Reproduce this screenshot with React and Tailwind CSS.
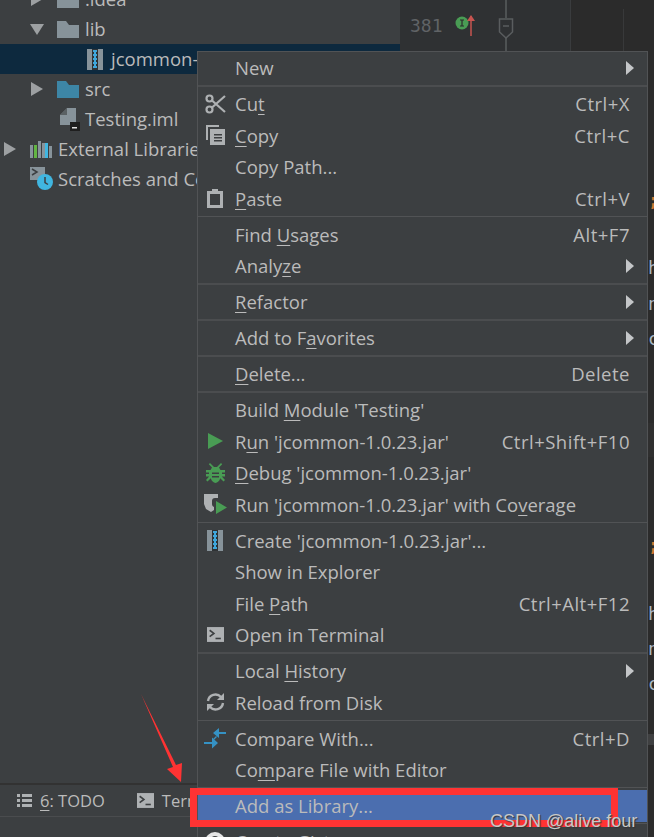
const Tri = ({ down }) => (
  <svg width="14" height="14" viewBox="0 0 14 14">
    {down ? <path d="M0 2h14L7 13z" fill="#9da0a2" /> : <path d="M1 0l12 7-12 7z" fill="#9da0a2" />}
  </svg>
);

const Folder = ({ color = '#87939a' }) => (
  <svg width="22" height="17" viewBox="0 0 22 17">
    <path d="M0 0h9l3 4h10v13H0z" fill={color} />
  </svg>
);

const Jar = () => (
  <svg width="16" height="21" viewBox="0 0 16 21">
    <rect width="16" height="21" fill="#87939a" />
    <rect x="5" y="0" width="6" height="21" fill="#2f3234" />
    <path d="M6 1h4v2H6zM6 5h4v2H6zM6 9h4v2H6zM6 13h4v2H6zM6 17h4v2H6z" fill="#3fa7dc" />
    <path d="M7 3h2v2H7zM7 7h2v2H7zM7 11h2v2H7zM7 15h2v2H7z" fill="#3fa7dc" />
  </svg>
);

const Scissors = () => (
  <svg width="21" height="20" viewBox="0 0 21 20" fill="none" stroke="#aeb1b3" strokeWidth="2.2">
    <circle cx="4.5" cy="4.5" r="3" />
    <circle cx="4.5" cy="15.5" r="3" />
    <path d="M7 6.5L20 18M7 13.5L20 2" />
  </svg>
);

const CopyIcon = () => (
  <svg width="19" height="20" viewBox="0 0 19 20">
    <path d="M0 0h13v2H2v13H0z" fill="#aeb1b3" />
    <path d="M4 4h15v16H4z" fill="#aeb1b3" />
    <path d="M8 9h8v1.5H8zM8 12h8v1.5H8zM8 15h8v1.5H8z" fill="#3c3f41" />
  </svg>
);

const Paste = () => (
  <svg width="16" height="19" viewBox="0 0 16 19">
    <path d="M0 2h5V0h6v2h5v17H0z" fill="#aeb1b3" />
    <path d="M3 5h10v11H3z" fill="#3c3f41" />
  </svg>
);

const Play = () => (
  <svg width="15" height="16" viewBox="0 0 15 16">
    <path d="M0 0l15 8-15 8z" fill="#499c54" />
  </svg>
);

const Bug = () => (
  <svg width="19" height="20" viewBox="0 0 19 20">
    <path d="M4 0l4 4h3l4-4 1.200 1.200L13 4.500 14.500 7H4.500L6 4.500 2.800 1.200z" fill="#499c54" />
    <path d="M4 7h11l4 0v2.500h-3V11h3v2.500h-3.200L19 17l-1.500 1.500-3.300-3.200C13.500 18 11.500 20 9.500 20s-4-2-4.700-4.700L1.500 18.500 0 17l3.200-3.500H0V11h3V9.500H0V7z" fill="#499c54" />
    <path d="M6 9.500h7V11H6zM6 13h7v1.500H6z" fill="#3c3f41" />
  </svg>
);

const Coverage = () => (
  <svg width="23" height="22" viewBox="0 0 23 22">
    <path d="M0 1h14v4h-3a3 3 0 0 0-3 3v3a3 3 0 0 0 2 3v3l-3 2-5-3-2-5z" fill="#aeb1b3" />
    <path d="M12 8l11 6.500L12 21z" fill="#499c54" />
  </svg>
);

const TerminalIcon = ({ w = 17 }) => (
  <svg width={w} height={w - 2} viewBox="0 0 16 14">
    <rect width="16" height="14" fill="#aeb1b3" />
    <path d="M2.500 3l4 3-4 3" fill="none" stroke="#3c3f41" strokeWidth="1.500" />
    <path d="M8 10h5v1.500H8z" fill="#3c3f41" />
  </svg>
);

const Reload = () => (
  <svg width="19" height="18" viewBox="0 0 19 18" fill="none" stroke="#aeb1b3" strokeWidth="2.400">
    <path d="M2 8a7.500 7.500 0 0 1 13-4" />
    <path d="M17 10a7.500 7.500 0 0 1-13 4" />
    <path d="M18 0v7h-7z" fill="#aeb1b3" stroke="none" />
    <path d="M1 18v-7h7z" fill="#aeb1b3" stroke="none" />
  </svg>
);

const Compare = () => (
  <svg width="22" height="21" viewBox="0 0 22 21">
    <path d="M9 5l6-5v4h7v2h-7v4z" fill="#3592c4" />
    <path d="M0 14h8v-4.500l6 5.500-6 5.500V16H0z" fill="#3592c4" />
    <path d="M9.500 11.500l3-3" stroke="#3592c4" strokeWidth="1.200" />
  </svg>
);

const Github = () => (
  <svg width="20" height="20" viewBox="0 0 20 20">
    <circle cx="10" cy="10" r="10" fill="#e6e6e6" />
    <circle cx="10" cy="9" r="5" fill="#3c3f41" />
  </svg>
);

const Arrow = () => (
  <svg width="8" height="14" viewBox="0 0 8 14">
    <path d="M0 0l8 7-8 7z" fill="#c4c6c8" />
  </svg>
);

const Sep = ({ thick }) => (
  <div className="h-[4.5px] flex items-center">
    <div className={thick ? 'h-[2px] w-full bg-[#4b4d4f]' : 'h-px w-full bg-[#515355]'} />
  </div>
);

const U = ({ children }) => <u className="underline-offset-[3px] decoration-1">{children}</u>;

const Row = ({ icon, right, sub, selected, children }) => (
  <div className={`h-[31.5px] flex items-center ${selected ? 'bg-[#4b6eaf]' : ''}`}>
    <div className="w-[37px] shrink-0 flex items-center justify-center pr-[3px]">{icon}</div>
    <div className="flex-1 whitespace-nowrap pt-px">{children}</div>
    {right && <div className="pr-[17px] pt-px whitespace-nowrap tracking-[0.5px]">{right}</div>}
    {sub && (
      <div className="pr-[13px] flex items-center">
        <Arrow />
      </div>
    )}
  </div>
);

const TreeRow = ({ indent, iconW = 28, arrow, icon, selected, children }) => (
  <div className={`h-[30px] flex items-center whitespace-nowrap ${selected ? 'bg-[#0d293e]' : ''}`} style={{ paddingLeft: indent }}>
    <div className="w-[27px] shrink-0 flex items-center">{arrow}</div>
    <div className="shrink-0 flex items-center" style={{ width: iconW }}>{icon}</div>
    <span>{children}</span>
  </div>
);

const CodeBit = ({ top, color = 'text-[#a9b7c6]', children }) => (
  <div className={`h-[24px] leading-[24px] ${color}`} style={{ marginTop: top }}>
    {children}
  </div>
);

export default function App() {
  return (
    <div className="relative w-[654px] h-[837px] overflow-hidden flex bg-[#3c3f41] text-[18.5px] text-[#bbbbbb] font-['Open_Sans','Noto_Sans',sans-serif]">
      {/* project tree + bottom tool bar */}
      <div className="w-[400px] shrink-0 flex flex-col">
        <div className="mt-[-16px] flex-1">
          <TreeRow indent={30} arrow={<Tri />} icon={<Folder />}>.idea</TreeRow>
          <TreeRow indent={30} arrow={<Tri down />} icon={<Folder />}>lib</TreeRow>
          <TreeRow indent={60} iconW={24} icon={<Jar />} selected>jcommon-1.0.23.jar</TreeRow>
          <TreeRow indent={30} arrow={<Tri />} icon={<Folder color="#3d86a6" />}>src</TreeRow>
          <TreeRow indent={33} iconW={25} icon={
            <svg width="20" height="23" viewBox="0 0 20 23">
              <path d="M7 0h9v17H0V7z" fill="#87939a" />
              <path d="M0 7h7V0z" fill="#3c3f41" opacity=".6" />
              <rect x="10" y="14" width="10" height="9" fill="#1f1f1f" />
              <rect x="12" y="19" width="5" height="1.500" fill="#e0e0e0" />
            </svg>
          }>Testing.iml</TreeRow>
          <div className="h-[30px] flex items-center whitespace-nowrap pl-[3px]">
            <div className="w-[27px] shrink-0"><Tri /></div>
            <div className="w-[28px] shrink-0">
              <svg width="22" height="17" viewBox="0 0 22 17">
                <path d="M0 4h3v13H0zM12 2h3v15h-3z" fill="#87939a" />
                <path d="M4 4h3v13H4z" fill="#62b543" />
                <path d="M8 0h3v17H8z" fill="#87939a" />
                <path d="M15 2h3v15h-3z" fill="#40b6e0" />
                <path d="M19 5h3v12h-3z" fill="#87939a" />
              </svg>
            </div>
            External Libraries
          </div>
          <div className="h-[30px] flex items-center whitespace-nowrap pl-[30px]">
            <div className="w-[28px] shrink-0">
              <svg width="24" height="24" viewBox="0 0 24 24">
                <rect width="15" height="13" fill="#87939a" />
                <path d="M2 2l5 3-5 3" fill="none" stroke="#3c3f41" strokeWidth="1.500" />
                <circle cx="15" cy="15" r="8" fill="#40b6e0" />
                <path d="M15 10v5.500l3 2" fill="none" stroke="#3c3f41" strokeWidth="1.500" />
              </svg>
            </div>
            Scratches and Consoles
          </div>
        </div>
        <div className="h-[34px] border-t-2 border-[#323232] border-b border-b-[#4a4c4e] flex items-center mb-[20px]">
          <svg className="ml-[17px]" width="15" height="13" viewBox="0 0 15 13" fill="#aeb1b3">
            <path d="M0 0h3v3H0zM5 0h10v3H5zM0 5h3v3H0zM5 5h10v3H5zM0 10h3v3H0zM5 10h10v3H5z" />
          </svg>
          <span className="ml-[8px] pt-[2px] text-[16.5px]"><U>6</U>: TODO</span>
          <div className="ml-[32px]"><TerminalIcon /></div>
          <span className="ml-[8px] pt-[2px] text-[16.5px]">Terminal</span>
        </div>
      </div>

      {/* editor gutter and code behind the menu */}
      <div className="flex-1 flex bg-[#2b2b2b]">
        <div className="w-[170px] bg-[#2f3133] flex">
          <div className="w-[98px] flex items-start pl-[10px] pt-[12px] gap-[1px]">
            <span className="font-['DejaVu_Sans_Mono',monospace] text-[18px] text-[#606366] leading-[28px]">381</span>
            <svg className="ml-[10px]" width="26" height="24" viewBox="0 0 26 24">
              <circle cx="8" cy="11" r="6.500" fill="#499c54" />
              <path d="M6 8h4M8 8v6M6 14h4" stroke="#2b2b2b" strokeWidth="1.200" />
              <path d="M17 4v20" stroke="#c75450" strokeWidth="1.500" />
              <path d="M13 9l4-6 4 6z" fill="#c75450" />
            </svg>
          </div>
          <div className="w-[30px]">
            <svg width="16" height="52" viewBox="0 0 16 52" fill="none" stroke="#5a5d5f" strokeWidth="1.500">
              <path d="M8 0v18M8 38v14" />
              <path d="M1.500 19h13v13L8 38l-6.500-6z" />
              <path d="M5 26h6" />
            </svg>
          </div>
        </div>
        <div className="w-[53px] border-l border-[#3a3c3e] bg-[#2b2b2b] mt-0" />
        <div className="flex-1 border-l border-[#38393a] mt-[9px] pl-[24px] font-['DejaVu_Sans_Mono',monospace] text-[18px]">
          <CodeBit top={180} color="text-[#cc7832] font-bold">;</CodeBit>
          <CodeBit top={43}>h</CodeBit>
          <CodeBit top={12}>n</CodeBit>
          <CodeBit top={11}>c</CodeBit>
          <CodeBit top={183} color="text-[#cc7832] font-bold">;</CodeBit>
          <CodeBit top={44}>h</CodeBit>
          <CodeBit top={11}>n</CodeBit>
          <CodeBit top={11}>c</CodeBit>
        </div>
      </div>

      {/* lighter caret-row bands in the editor strip */}
      <div className="absolute left-[648px] top-[423px] w-[6px] h-[34px] bg-[#2f2f2f]" />
      <div className="absolute left-[648px] top-[734px] w-[6px] h-[11px] bg-[#3f4041]" />

      {/* context menu */}
      <div className="absolute left-[197px] top-[51px] w-[451px] h-[800px] bg-[#3c3f41] border border-[#515355]">
        <Row sub>New</Row>
        <Sep thick />
        <Row icon={<Scissors />} right="Ctrl+X">Cu<U>t</U></Row>
        <Row icon={<CopyIcon />} right="Ctrl+C"><U>C</U>opy</Row>
        <Row>Copy Path...</Row>
        <Row icon={<Paste />} right="Ctrl+V"><U>P</U>aste</Row>
        <Sep />
        <Row right="Alt+F7">Find <U>U</U>sages</Row>
        <Row sub>Analy<U>z</U>e</Row>
        <Sep thick />
        <Row sub><U>R</U>efactor</Row>
        <Sep thick />
        <Row sub>Add to F<U>a</U>vorites</Row>
        <Sep thick />
        <Row right="Delete"><U>D</U>elete...</Row>
        <Sep thick />
        <Row>Build <U>M</U>odule 'Testing'</Row>
        <Row icon={<Play />} right="Ctrl+Shift+F10">R<U>u</U>n 'jcommon-1.0.23.jar'</Row>
        <Row icon={<Bug />}><U>D</U>ebug 'jcommon-1.0.23.jar'</Row>
        <Row icon={<Coverage />}>Run 'jcommon-1.0.23.jar' with Co<U>v</U>erage</Row>
        <Sep />
        <Row icon={<Jar />}>Create 'jcommon-1.0.23.jar'...</Row>
        <Row>Show in Explorer</Row>
        <Row right="Ctrl+Alt+F12">File <U>P</U>ath</Row>
        <Row icon={<TerminalIcon />}>Open in Terminal</Row>
        <Sep thick />
        <Row sub>Local <U>H</U>istory</Row>
        <Row icon={<Reload />}>Reload from Disk</Row>
        <Sep />
        <Row icon={<Compare />} right="Ctrl+D">Compare With...</Row>
        <Row>Co<U>m</U>pare File with Editor</Row>
        <Sep />
        <Row selected>Add as Library...</Row>
        <Sep />
        <Row icon={<Github />}>Create Gist...</Row>
      </div>

      {/* annotations drawn over the screenshot */}
      <div className="absolute left-[190px] top-[788px] w-[428px] h-[39px] border-[7px] border-[#ff3333]" />
      <svg className="absolute left-[138px] top-[692px]" width="48" height="94" viewBox="0 0 48 94">
        <path d="M3 2L38 73l6-2-1 19-14-13 6-2z" fill="#ff3333" />
      </svg>
      <div className="absolute left-[490px] top-[811px] font-['Liberation_Sans',sans-serif] text-[18px] leading-[20px] text-[#c8c8c8] [text-shadow:1px_1px_1px_#333]">
        CSDN @alive four
      </div>
    </div>
  );
}
